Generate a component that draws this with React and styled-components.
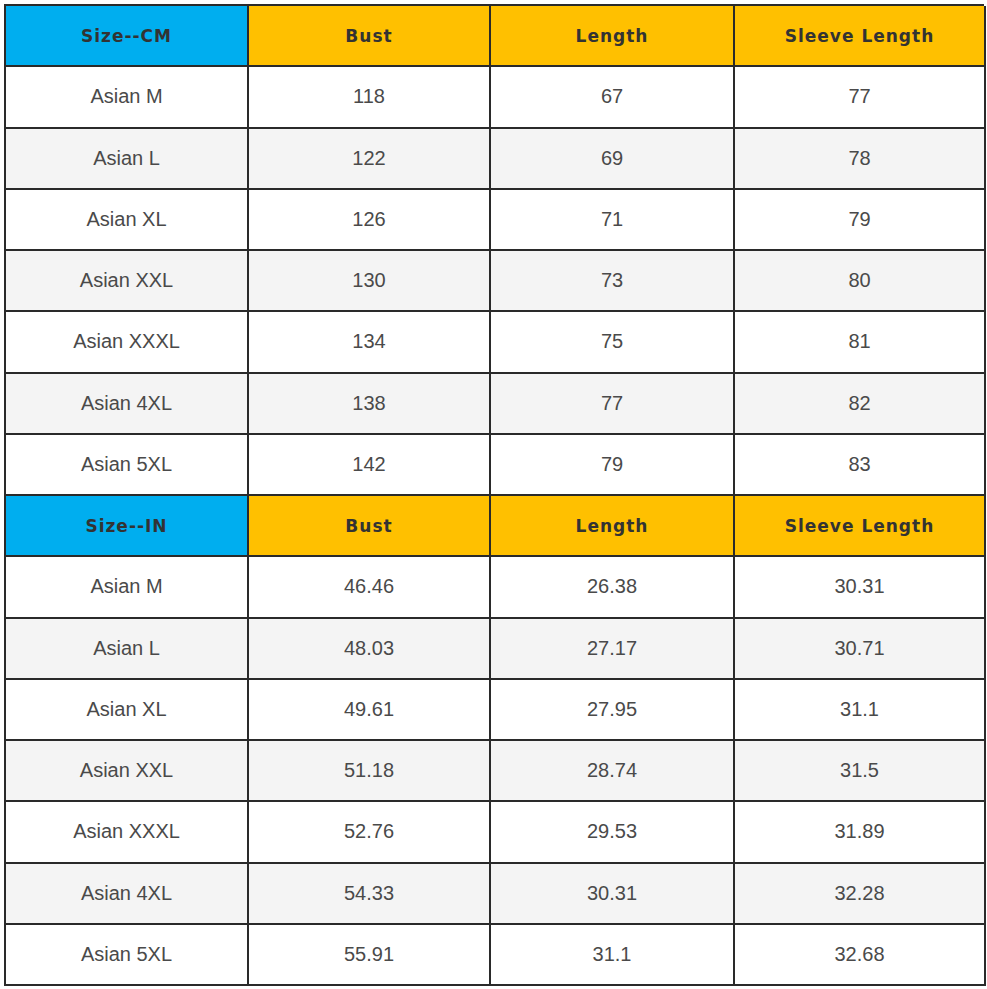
import React from "react";
import styled, { createGlobalStyle } from "styled-components";

const GlobalStyle = createGlobalStyle`
  html, body {
    margin: 0;
    padding: 0;
    background: #ffffff;
  }
`;

const Page = styled.div`
  padding: 4px 0 0 4px;
  width: 987px;
  height: 989px;
  box-sizing: border-box;
`;

const Grid = styled.div`
  display: grid;
  grid-template-columns: 243px 242px 244px 251px;
  grid-auto-rows: 61.25px;
  width: 980px;
  border-top: 2px solid #2a2a2a;
  border-left: 2px solid #2a2a2a;
  box-sizing: border-box;
`;

const Cell = styled.div`
  display: flex;
  align-items: center;
  justify-content: center;
  border-right: 2px solid #2a2a2a;
  border-bottom: 2px solid #2a2a2a;
  box-sizing: border-box;
  background: ${(p) => (p.$shade ? "#f4f4f4" : "#ffffff")};
  font-family: "Liberation Sans", Arial, sans-serif;
  font-size: 20px;
  color: #4a4a4a;
  letter-spacing: 0px;
`;

const HeadCell = styled(Cell)`
  background: ${(p) => (p.$blue ? "#00aeef" : "#ffc000")};
  font-family: "DejaVu Sans", Verdana, sans-serif;
  font-weight: bold;
  font-size: 17px;
  letter-spacing: 1px;
  color: #333333;
`;

const sizes = ["Asian M", "Asian L", "Asian XL", "Asian XXL", "Asian XXXL", "Asian 4XL", "Asian 5XL"];

const cm = [
  [118, 67, 77],
  [122, 69, 78],
  [126, 71, 79],
  [130, 73, 80],
  [134, 75, 81],
  [138, 77, 82],
  [142, 79, 83],
];

const inch = [
  ["46.46", "26.38", "30.31"],
  ["48.03", "27.17", "30.71"],
  ["49.61", "27.95", "31.1"],
  ["51.18", "28.74", "31.5"],
  ["52.76", "29.53", "31.89"],
  ["54.33", "30.31", "32.28"],
  ["55.91", "31.1", "32.68"],
];

const Section = ({ title, data }) => (
  <>
    <HeadCell $blue>{title}</HeadCell>
    <HeadCell>Bust</HeadCell>
    <HeadCell>Length</HeadCell>
    <HeadCell>Sleeve Length</HeadCell>
    {data.map((row, i) => (
      <React.Fragment key={i}>
        <Cell $shade={i % 2 === 1}>{sizes[i]}</Cell>
        {row.map((v, j) => (
          <Cell key={j} $shade={i % 2 === 1}>
            {v}
          </Cell>
        ))}
      </React.Fragment>
    ))}
  </>
);

const App = () => {
  return (
    <Page>
      <GlobalStyle />
      <Grid>
        <Section title="Size--CM" data={cm} />
        <Section title="Size--IN" data={inch} />
      </Grid>
    </Page>
  );
};

export default App;
